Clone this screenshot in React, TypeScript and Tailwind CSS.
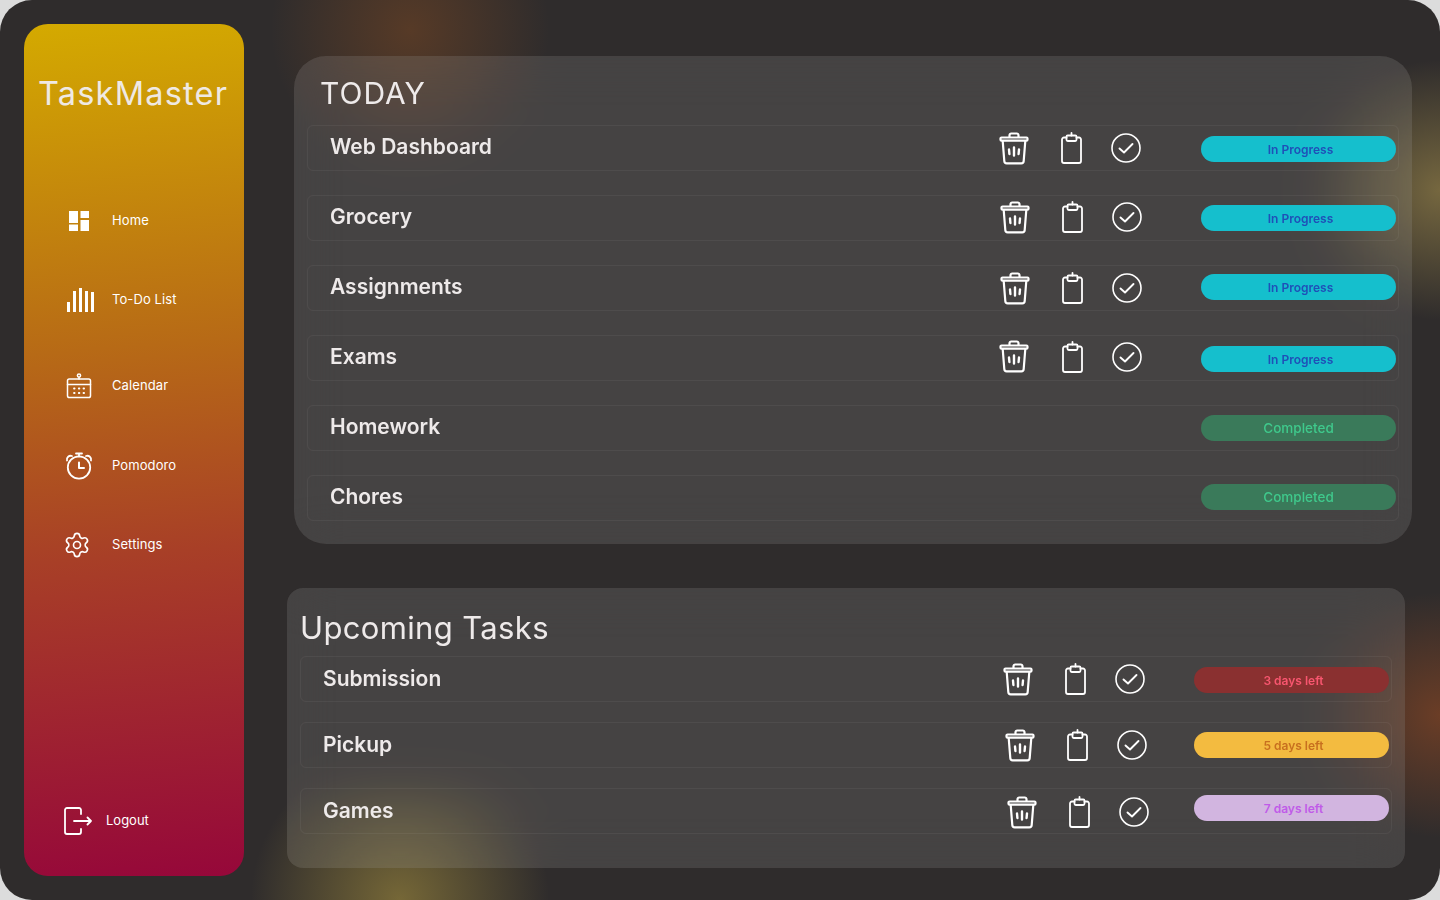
import React from 'react';
import { Settings } from 'lucide-react';

const TrashIcon = ({ className = '' }: { className?: string }) => (
  <svg width="30" height="33" viewBox="0 0 30 33" fill="none" stroke="white" strokeWidth="2.200" strokeLinecap="round" strokeLinejoin="round" className={className}>
    <path d="M10.5 5V3.2A1.7 1.7 0 0 1 12.2 1.5h5.6a1.7 1.700 0 0 1 1.7 1.7V5" />
    <path d="M2.5 5.500h25a1 1 0 0 1 1 1v1.200a1 1 0 0 1-1 1h-25a1 1 0 0 1-1-1V6.500a1 1 0 0 1 1-1z" />
    <path d="M3.700 9L5.300 29a2.400 2.400 0 0 0 2.400 2.300h14.600a2.400 2.400 0 0 0 2.400-2.300L26.300 9" />
    <path d="M10 17.500l.4 4.500M15 15.500v8M20 17.500l-.4 4.500" strokeWidth="2.400" />
  </svg>
);

const ClipboardIcon = ({ className = '' }: { className?: string }) => (
  <svg width="21" height="32" viewBox="0 0 21 32" fill="none" stroke="white" strokeWidth="1.800" strokeLinecap="round" strokeLinejoin="round" className={className}>
    <path d="M5.500 5.500H3A2 2 0 0 0 1 7.500v21.500a2 2 0 0 0 2 2h15a2 2 0 0 0 2-2V7.500a2 2 0 0 0-2-2h-2.500" />
    <rect x="5.500" y="3.500" width="10" height="5.500" rx="1.200" />
    <path d="M10.500 1v2.500" />
  </svg>
);

const CheckIcon = ({ className = '' }: { className?: string }) => (
  <svg width="30" height="30" viewBox="0 0 30 30" fill="none" stroke="white" strokeLinecap="round" strokeLinejoin="round" className={className}>
    <circle cx="15" cy="15" r="14" strokeWidth="1.600" />
    <path d="M8.500 15.500l4.500 4 8.500-8.500" strokeWidth="1.900" />
  </svg>
);

const HomeIcon = () => (
  <svg width="22" height="22" viewBox="0 0 22 22" fill="white">
    <rect x="1" y="1" width="9" height="12" />
    <rect x="12.500" y="1" width="8.500" height="7" />
    <rect x="1" y="14.500" width="9" height="6.500" />
    <rect x="12.500" y="10" width="8.500" height="11" />
  </svg>
);

const BarsIcon = () => (
  <svg width="28" height="25" viewBox="0 0 28 25" fill="white">
    <rect x="0" y="14" width="3" height="10" />
    <rect x="6" y="3" width="3" height="21" />
    <rect x="12" y="0" width="3" height="24" />
    <rect x="18" y="3" width="3" height="21" />
    <rect x="24" y="4" width="3" height="20" />
  </svg>
);

const CalendarIcon = () => (
  <svg width="26" height="26" viewBox="0 0 26 26" fill="none" stroke="white" strokeWidth="1.500" strokeLinecap="round">
    <circle cx="13" cy="2.500" r="1.600" />
    <path d="M13 4.500v1.500" />
    <rect x="1.500" y="6" width="23" height="18.500" rx="1.800" />
    <path d="M1.500 11.500h23" />
    <path d="M8 15.500h.6M12.800 15.500h.6M17.500 15.500h.6M8 20h.6M12.800 20h.6M17.500 20h.6" strokeWidth="1.800" />
  </svg>
);

const PomodoroIcon = () => (
  <svg width="28" height="28" viewBox="0 0 28 28" fill="none" stroke="white" strokeWidth="1.800" strokeLinecap="round" strokeLinejoin="round">
    <circle cx="14" cy="15.500" r="11.200" />
    <path d="M11 1.500h6M14 1.500v3" />
    <path d="M2 8.500a3.800 3.800 0 0 1 5-4.500M26 8.500a3.800 3.800 0 0 0-5-4.500" />
    <path d="M14 10.500v5.500h5" strokeWidth="2" />
  </svg>
);

const LogoutIcon = () => (
  <svg width="28" height="28" viewBox="0 0 28 28" fill="none" stroke="white" strokeWidth="1.800" strokeLinecap="round" strokeLinejoin="round">
    <path d="M17 7V3a2 2 0 0 0-2-2H3a2 2 0 0 0-2 2v22a2 2 0 0 0 2 2h12a2 2 0 0 0 2-2v-3" />
    <path d="M10 14h17M23.500 10.500L27 14l-3.500 3.500" />
  </svg>
);

const navItems = [
  { label: 'Home', icon: <HomeIcon />, cls: 'mt-0', iconCls: 'pl-[44px] w-[88px]' },
  { label: 'To-Do List', icon: <BarsIcon />, cls: 'mt-[55px]', iconCls: 'pl-[43px] w-[88px]' },
  { label: 'Calendar', icon: <CalendarIcon />, cls: 'mt-[62px]', iconCls: 'pl-[42px] w-[88px]' },
  { label: 'Pomodoro', icon: <PomodoroIcon />, cls: 'mt-[56px]', iconCls: 'pl-[41px] w-[88px]' },
  { label: 'Settings', icon: <Settings size={28} strokeWidth={1.4} />, cls: 'mt-[55px]', iconCls: 'pl-[39px] w-[88px]' },
];

const badgeStyles: Record<string, string> = {
  progress: 'bg-[#15bfcd] text-[#1f50b8] text-[12px] font-semibold pl-[4px] pt-[2px]',
  done: 'bg-[#3a7a5a] text-[#3fc98c] text-[13.500px] font-medium',
  red: 'bg-[#8a3030] text-[#f8566f] text-[12px] font-semibold pl-[4px] pt-[2px]',
  yellow: 'bg-[#f3bb40] text-[#c8701f] text-[12px] font-semibold pl-[4px] pt-[2px]',
  purple: 'bg-[#d2b5e0] text-[#c05be8] text-[12px] font-semibold pl-[4px] pt-[2px]',
};

type Task = {
  name: string;
  badge: string;
  kind: string;
  icons?: string;
  trash?: string;
  badgeCls?: string;
};

const todayTasks: Task[] = [
  { name: 'Web Dashboard', badge: 'In Progress', kind: 'progress', icons: 'mr-[60px]', badgeCls: 'mt-[2px]' },
  { name: 'Grocery', badge: 'In Progress', kind: 'progress', icons: 'mr-[59px] -mt-[2px]' },
  { name: 'Assignments', badge: 'In Progress', kind: 'progress', icons: 'mr-[59px]', badgeCls: '-mt-[2px]' },
  { name: 'Exams', badge: 'In Progress', kind: 'progress', icons: 'mr-[59px] -mt-[2px]', trash: '-mt-[2px] -ml-[1px] mr-[1px]', badgeCls: 'mt-[2px]' },
  { name: 'Homework', badge: 'Completed', kind: 'done' },
  { name: 'Chores', badge: 'Completed', kind: 'done', badgeCls: '-mt-[2px]' },
];

const upcomingTasks: Task[] = [
  { name: 'Submission', badge: '3 days left', kind: 'red', icons: 'mr-[49px]', badgeCls: 'mt-[2px]' },
  { name: 'Pickup', badge: '5 days left', kind: 'yellow', icons: 'mr-[47px]' },
  { name: 'Games', badge: '7 days left', kind: 'purple', icons: 'mr-[45px] mt-[2px]', badgeCls: '-mt-[6px]' },
];

const TaskRow = ({ task, nameCls }: { task: Task; nameCls: string }) => (
  <div className="flex h-[46px] items-center rounded-md border border-white/[0.05] pl-[22px] pr-[2px]">
    <span className={`flex-1 text-[21px] leading-none font-semibold text-[#eeeaea] ${nameCls}`}>{task.name}</span>
    {task.icons && (
      <div className={`flex items-center ${task.icons}`}>
        <TrashIcon className={task.trash} />
        <ClipboardIcon className="ml-[32px]" />
        <CheckIcon className="ml-[29px]" />
      </div>
    )}
    <div className={`flex h-[26px] w-[195px] items-center justify-center rounded-full ${badgeStyles[task.kind]} ${task.badgeCls ?? ''}`}>
      {task.badge}
    </div>
  </div>
);

export default function App() {
  return (
    <div className="h-[900px] w-[1440px] bg-[#dcdcdc] font-['Inter',sans-serif]">
      <div className="relative flex h-full overflow-hidden rounded-[32px] bg-[#2f2c2c]">
        {/* glows behind the glass panels */}
        <div className="absolute left-[260px] top-[-110px] h-[280px] w-[300px] rounded-full bg-[radial-gradient(circle,rgba(190,95,25,0.28),transparent_68%)]" />
        <div className="absolute left-[210px] top-[790px] h-[220px] w-[380px] rounded-full bg-[radial-gradient(circle,rgba(215,185,70,0.42),transparent_68%)]" />
        <div className="absolute left-[1310px] top-[50px] h-[280px] w-[260px] rounded-full bg-[radial-gradient(circle,rgba(215,185,90,0.42),transparent_68%)]" />
        <div className="absolute left-[1320px] top-[580px] h-[270px] w-[240px] rounded-full bg-[radial-gradient(circle,rgba(190,85,30,0.42),transparent_68%)]" />

        <aside className="relative my-[24px] ml-[24px] flex w-[220px] shrink-0 flex-col rounded-[24px] bg-[linear-gradient(175deg,#d4aa00,#b76a16_38%,#a83f27_62%,#96073a)] pb-[41px] pt-[54px]">
          <div className="pl-[14px] text-[32.5px] leading-[32px] font-normal tracking-[1.2px] text-[#efe9e3]">TaskMaster</div>
          <nav className="mt-[99px] flex flex-col">
            {navItems.map((item) => (
              <a key={item.label} className={`flex h-[24px] items-center text-[13px] tracking-[0.1px] text-white ${item.cls}`}>
                <span className={`flex shrink-0 items-center ${item.iconCls}`}>{item.icon}</span>
                {item.label}
              </a>
            ))}
          </nav>
          <a className="mt-auto flex h-[28px] items-center pl-[40px] text-[13px] text-white">
            <LogoutIcon />
            <span className="ml-[14px]">Logout</span>
          </a>
        </aside>

        <main className="relative flex flex-1 flex-col items-start pt-[56px]">
          <section className="ml-[50px] h-[488px] w-[1118px] rounded-[32px] bg-white/[0.11] px-[13px] pt-[19px] backdrop-blur-xl">
            <h2 className="pl-[13px] text-[30px] leading-[36px] font-normal tracking-[1px] text-[#eeeaea]">TODAY</h2>
            <div className="mt-[14px] flex flex-col gap-[24px]">
              {todayTasks.map((task) => (
                <TaskRow key={task.name} task={task} nameCls="-mt-[3px]" />
              ))}
            </div>
          </section>

          <section className="ml-[43px] mt-[44px] h-[280px] w-[1118px] rounded-[16px] bg-white/[0.11] px-[13px] pt-[22px] backdrop-blur-xl">
            <h2 className="text-[31px] leading-[36px] font-normal tracking-[0.35px] text-[#eeeaea]">Upcoming Tasks</h2>
            <div className="mt-[10px] flex flex-col gap-[20px]">
              {upcomingTasks.map((task) => (
                <TaskRow key={task.name} task={task} nameCls="-mt-[1px]" />
              ))}
            </div>
          </section>
        </main>
      </div>
    </div>
  );
}
